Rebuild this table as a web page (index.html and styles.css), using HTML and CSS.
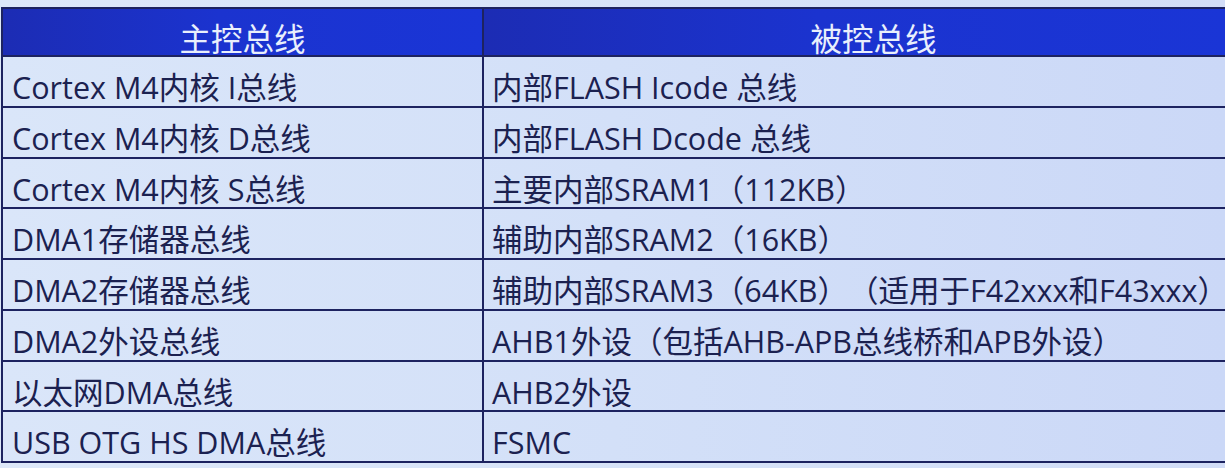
FILE: index.html
```html
<!DOCTYPE html>
<html lang="zh-CN">
<head>
<meta charset="utf-8">
<title>总线矩阵</title>
<link rel="stylesheet" href="styles.css">
</head>
<body>
<div class="bus-table">
  <div class="cell head">主控总线</div>
  <div class="cell head right">被控总线</div>

  <div class="cell">Cortex M4内核 I总线</div>
  <div class="cell right">内部FLASH Icode 总线</div>

  <div class="cell">Cortex M4内核 D总线</div>
  <div class="cell right">内部FLASH Dcode 总线</div>

  <div class="cell">Cortex M4内核 S总线</div>
  <div class="cell right">主要内部SRAM1（112KB）</div>

  <div class="cell">DMA1存储器总线</div>
  <div class="cell right">辅助内部SRAM2（16KB）</div>

  <div class="cell">DMA2存储器总线</div>
  <div class="cell right">辅助内部SRAM3（64KB）（适用于F42xxx和F43xxx<span class="end-punct">）</span></div>

  <div class="cell">DMA2外设总线</div>
  <div class="cell right">AHB1外设（包括AHB-APB总线桥和APB外设）</div>

  <div class="cell">以太网DMA总线</div>
  <div class="cell right">AHB2外设</div>

  <div class="cell">USB OTG HS DMA总线</div>
  <div class="cell right">FSMC</div>
</div>
</body>
</html>
```

FILE: styles.css
```css
html, body {
  margin: 0;
  padding: 0;
}

body {
  width: 1225px;
  height: 468px;
  overflow: hidden;
  background: linear-gradient(90deg, #dde8f9 0%, #d6e2f8 60%, #d2ddf7 100%);
  font-family: "Open Sans", "Noto Sans CJK SC", sans-serif;
  color: #1b2150;
  text-spacing-trim: space-all;
}

.bus-table {
  margin: 7px 0 0 1px;
  width: 1224px;
  display: grid;
  grid-template-columns: 479px 1fr;
  grid-template-rows: 48px repeat(8, 50.75px);
  border-top: 2px solid #1d2360;
  border-left: 2px solid #1d2360;
  box-sizing: border-box;
  background: linear-gradient(90deg, #dae6f9 0%, #d3e0f8 50%, #cbd8f7 100%);
}

.cell {
  border-bottom: 2px solid #1d2360;
  font-size: 30.5px;
  line-height: 1;
  padding: 15px 0 0 9px;
  white-space: nowrap;
  box-sizing: border-box;
  min-width: 0;
}

.cell.right {
  border-left: 2px solid #1d2360;
  padding-left: 8px;
}

.end-punct {
  font-feature-settings: "halt" 1;
}

.head {
  background: linear-gradient(90deg, #1c2cb4 0%, #1b33cf 45%, #1a35d6 100%);
  color: #e9effc;
  text-align: center;
  font-size: 31.5px;
  padding: 14px 0 0 0;
}

.head.right {
  padding-left: 38px;
}
```
